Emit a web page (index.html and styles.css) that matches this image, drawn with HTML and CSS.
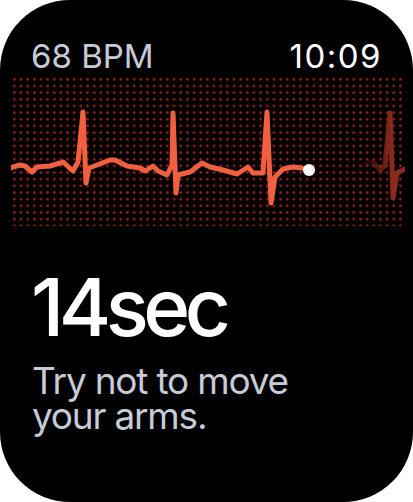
FILE: index.html
```
<!DOCTYPE html>
<html>
<head>
<meta charset="utf-8">
<link rel="stylesheet" href="styles.css">
</head>
<body>
<div class="screen">
  <div class="status">
    <span class="bpm">68 BPM</span>
    <span class="time">10:09</span>
  </div>
  <div class="chart">
    <svg class="ecg" width="394" height="150" viewBox="11 76 394 150">
      <defs>
        <linearGradient id="fade" gradientUnits="userSpaceOnUse" x1="358" y1="0" x2="392" y2="0">
          <stop offset="0" stop-color="#7d2619" stop-opacity="0"/>
          <stop offset="1" stop-color="#8a2a1c" stop-opacity="1"/>
        </linearGradient>
      </defs>
      <polyline class="trace" points="10,168 20,165 25,166 32,172 37,167 50,166 60,163 63,162 73,171 78,162 83,112 86,183 89,168 97,165 110,160 115,160 127,166 140,168 145,171 153,166 158,171 167,175 172,165 173,113 176,193 178,175 190,172 202,163 210,167 223,170 237,174 248,167 253,173 263,173 267,112 271,203 275,177 283,169 293,167 302,168 309,170"/>
      <polyline class="trace faded" points="360,167 366,164 373,162 380,170 385,165 390,113 393,198 397,173 405,169"/>
      <circle class="cursor" cx="309" cy="170" r="6"/>
    </svg>
  </div>
  <div class="timer">14sec</div>
  <div class="hint">Try not to move your arms.</div>
</div>
</body>
</html>
```
FILE: styles.css
```
html, body {
  margin: 0;
  padding: 0;
  background: #ffffff;
}
.screen {
  width: 413px;
  height: 502px;
  background: #000000;
  border-radius: 70px;
  overflow: hidden;
  font-family: Inter, "Liberation Sans", sans-serif;
  box-sizing: border-box;
  padding-top: 36px;
}
.status {
  display: flex;
  justify-content: space-between;
  padding: 0 31px 0 31px;
  font-size: 33px;
  line-height: 40px;
  height: 40px;
}
.bpm {
  color: #c7cbd6;
  font-weight: 400;
}
.time {
  color: #ffffff;
  font-weight: 400;
  letter-spacing: 1.5px;
}
.chart {
  margin: 0 8px 0 11px;
  height: 150px;
  background-image: radial-gradient(circle, rgba(175, 42, 30, 1) 0, rgba(150, 34, 24, 0.8) 1px, rgba(0, 0, 0, 0) 1.9px);
  background-size: 6.67px 6.67px;
  background-position: 0 0;
}
.ecg {
  display: block;
}
.trace {
  fill: none;
  stroke: #f0603f;
  stroke-width: 5;
  stroke-linejoin: round;
  stroke-linecap: round;
}
.trace.faded {
  stroke: url(#fade);
}
.cursor {
  fill: #ffffff;
}
.timer {
  margin-top: 36px;
  padding-left: 31px;
  color: #ffffff;
  font-size: 80px;
  font-weight: 500;
  line-height: 90px;
  letter-spacing: -5.5px;
}
.hint {
  margin-top: 11px;
  padding-left: 32px;
  width: 290px;
  color: #c7cbd6;
  font-size: 37px;
  line-height: 35px;
  font-weight: 400;
  letter-spacing: -1.2px;
}
```
